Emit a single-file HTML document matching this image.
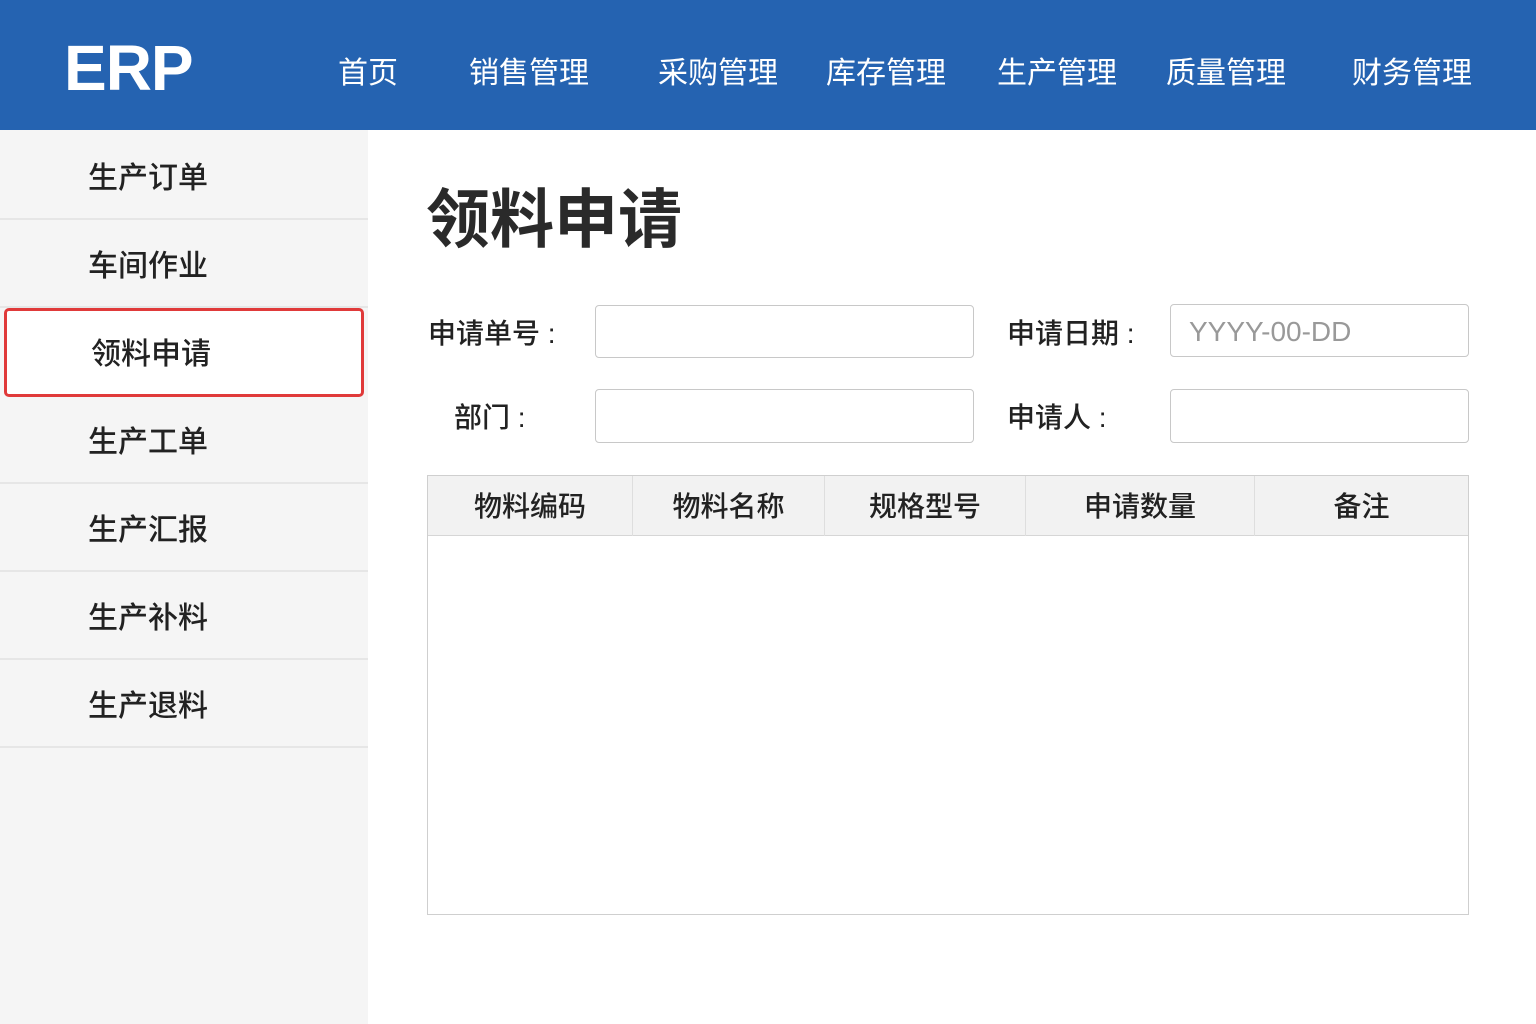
<!DOCTYPE html>
<html><head><meta charset="utf-8"><style>
*{margin:0;padding:0;box-sizing:border-box}
body{width:1536px;height:1024px;position:relative;background:#fff;font-family:"Liberation Sans","Noto Sans CJK SC",sans-serif;color:#222;overflow:hidden}
.hdr{position:absolute;left:0;top:0;width:1536px;height:130px;background:#2563b1}
.logo{position:absolute;left:64px;top:31px;font-size:64px;font-weight:bold;color:#fff;letter-spacing:-1px}
.nav{position:absolute;top:54px;font-size:30px;color:#fff;line-height:40px}
.side{position:absolute;left:0;top:130px;width:368px;height:894px;background:#f5f5f5}
.it{position:absolute;left:0;width:368px;height:88px;border-bottom:2px solid #e6e6e6;font-size:30px;line-height:94px;padding-left:88px;font-weight:500}
.sel{position:absolute;left:4px;top:308px;width:360px;height:89px;background:#fff;border:3px solid #e03a3a;border-radius:5px;font-size:30px;line-height:88px;padding-left:84px;font-weight:500}
h1{position:absolute;left:426px;top:182px;font-size:64px;font-weight:bold;line-height:76px;color:#2a2a2a}
.lb{position:absolute;font-size:28px;line-height:40px;color:#222;font-weight:500}
.in{position:absolute;border:1.5px solid #c8c8c8;border-radius:4px;background:#fff}
.tbl{position:absolute;left:427px;top:475px;width:1042px;height:440px;border:1.5px solid #cfcfcf}
.th{position:absolute;left:0;top:0;width:100%;height:60px;background:#f2f2f2;border-bottom:1.5px solid #d6d6d6}
.th div{position:absolute;top:0;height:60px;line-height:62px;text-align:center;font-size:28px;border-right:1.5px solid #dedede;font-weight:500}
</style></head><body>
<div class="hdr">
<div class="logo">ERP</div>
<div class="nav" style="left:338px">首页</div>
<div class="nav" style="left:469px">销售管理</div>
<div class="nav" style="left:658px">采购管理</div>
<div class="nav" style="left:826px">库存管理</div>
<div class="nav" style="left:997px">生产管理</div>
<div class="nav" style="left:1166px">质量管理</div>
<div class="nav" style="left:1352px">财务管理</div>
</div>
<div class="side">
<div class="it" style="top:2px">生产订单</div>
<div class="it" style="top:90px">车间作业</div>
<div class="it" style="top:266px">生产工单</div>
<div class="it" style="top:354px">生产汇报</div>
<div class="it" style="top:442px">生产补料</div>
<div class="it" style="top:530px">生产退料</div>
</div>
<div class="sel">领料申请</div>
<h1>领料申请</h1>
<div class="lb" style="left:428px;top:314px">申请单号 :</div>
<div class="in" style="left:595px;top:305px;width:379px;height:53px"></div>
<div class="lb" style="left:1007px;top:314px">申请日期 :</div>
<div class="in" style="left:1170px;top:304px;width:299px;height:53px;font-size:28px;line-height:54px;padding-left:18px;color:#999">YYYY-00-DD</div>
<div class="lb" style="left:454px;top:398px">部门 :</div>
<div class="in" style="left:595px;top:389px;width:379px;height:54px"></div>
<div class="lb" style="left:1007px;top:398px">申请人 :</div>
<div class="in" style="left:1170px;top:389px;width:299px;height:54px"></div>
<div class="tbl"><div class="th">
<div style="left:0;width:205px">物料编码</div>
<div style="left:205px;width:192px">物料名称</div>
<div style="left:397px;width:201px">规格型号</div>
<div style="left:598px;width:229px">申请数量</div>
<div style="left:827px;width:213px;border-right:none">备注</div>
</div></div>
</body></html>
